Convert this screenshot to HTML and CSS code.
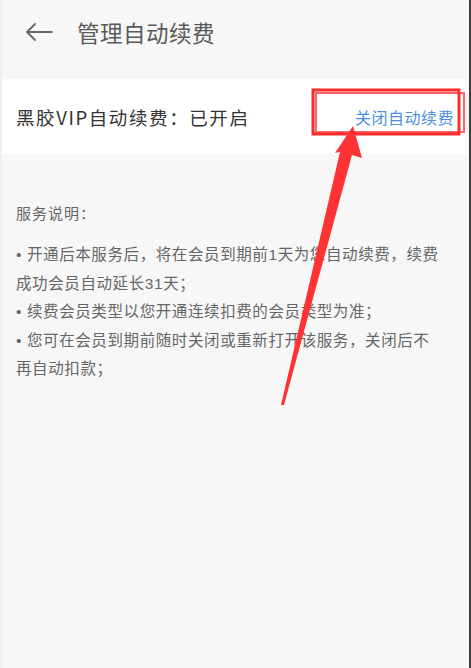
FILE: index.html
```html
<!DOCTYPE html>
<html lang="zh">
<head>
<meta charset="utf-8">
<link rel="stylesheet" href="styles.css">
</head>
<body>
<div class="screen">
  <header class="topbar">
    <svg class="back" width="28" height="18" viewBox="0 0 28 18">
      <path d="M27 9H2M10 1L2 9l8 8" fill="none" stroke="#666" stroke-width="1.8" stroke-linecap="round" stroke-linejoin="round"/>
    </svg>
    <h1 class="title">管理自动续费</h1>
  </header>
  <section class="card">
    <span class="label">黑胶VIP自动续费：已开启</span>
    <a class="link">关闭自动续费</a>
  </section>
  <section class="desc">
    <p class="desc-title">服务说明：</p>
    <p class="item">• 开通后本服务后，将在会员到期前1天为您自动续费，续费成功会员自动延长31天；</p>
    <p class="item">• 续费会员类型以您开通连续扣费的会员类型为准；</p>
    <p class="item">• 您可在会员到期前随时关闭或重新打开该服务，关闭后不再自动扣款；</p>
  </section>
  <svg class="annot" width="471" height="668" viewBox="0 0 471 668">
    <rect x="313" y="90" width="146" height="44" fill="none" stroke="#ff2a2a" stroke-width="3"/>
    <rect x="316" y="93" width="148" height="39" fill="none" stroke="#ff3b3b" stroke-width="2" opacity="0.8"/>
    <polygon points="353,126 362,158 352,155 284,405 281,405 340,152 335,153" fill="#ff3333"/>
  </svg>
</div>
</body>
</html>
```

FILE: styles.css
```css
html, body {
  margin: 0;
  padding: 0;
}
body {
  background: #f7f7f7;
  font-family: "Noto Sans CJK SC", "Noto Sans", sans-serif;
}
.screen {
  position: relative;
  width: 471px;
  height: 668px;
  box-sizing: border-box;
  border-left: 2px solid #eceef8;
  border-right: 2px solid #3c3c3c;
  overflow: hidden;
}
.topbar {
  height: 79px;
  display: flex;
  align-items: center;
  padding: 0 0 16px 23px;
  box-sizing: border-box;
}
.back {
  display: block;
}
.title {
  margin: 0 0 0 24px;
  font-size: 22.5px;
  font-weight: 400;
  color: #5a5a5a;
  letter-spacing: 0.5px;
}
.card {
  height: 75px;
  margin-right: 2px;
  background: #fff;
  display: flex;
  align-items: center;
  justify-content: space-between;
  padding: 0 13px 0 14px;
  box-sizing: border-box;
}
.label {
  font-size: 18.5px;
  color: #333;
  letter-spacing: 1.6px;
}
.link {
  font-size: 16px;
  color: #4d8fe0;
  letter-spacing: 0.5px;
}
.desc {
  padding: 47px 28px 0 14px;
  color: #666;
}
.desc-title {
  margin: 0 0 16px 0;
  font-size: 15px;
  letter-spacing: 1px;
  line-height: 24px;
}
.item {
  margin: 0;
  font-family: "Liberation Sans", "Noto Sans CJK SC", sans-serif;
  font-size: 15.5px;
  line-height: 28.5px;
  letter-spacing: 0.6px;
}
.annot {
  position: absolute;
  left: -2px;
  top: 0;
  pointer-events: none;
}
```
